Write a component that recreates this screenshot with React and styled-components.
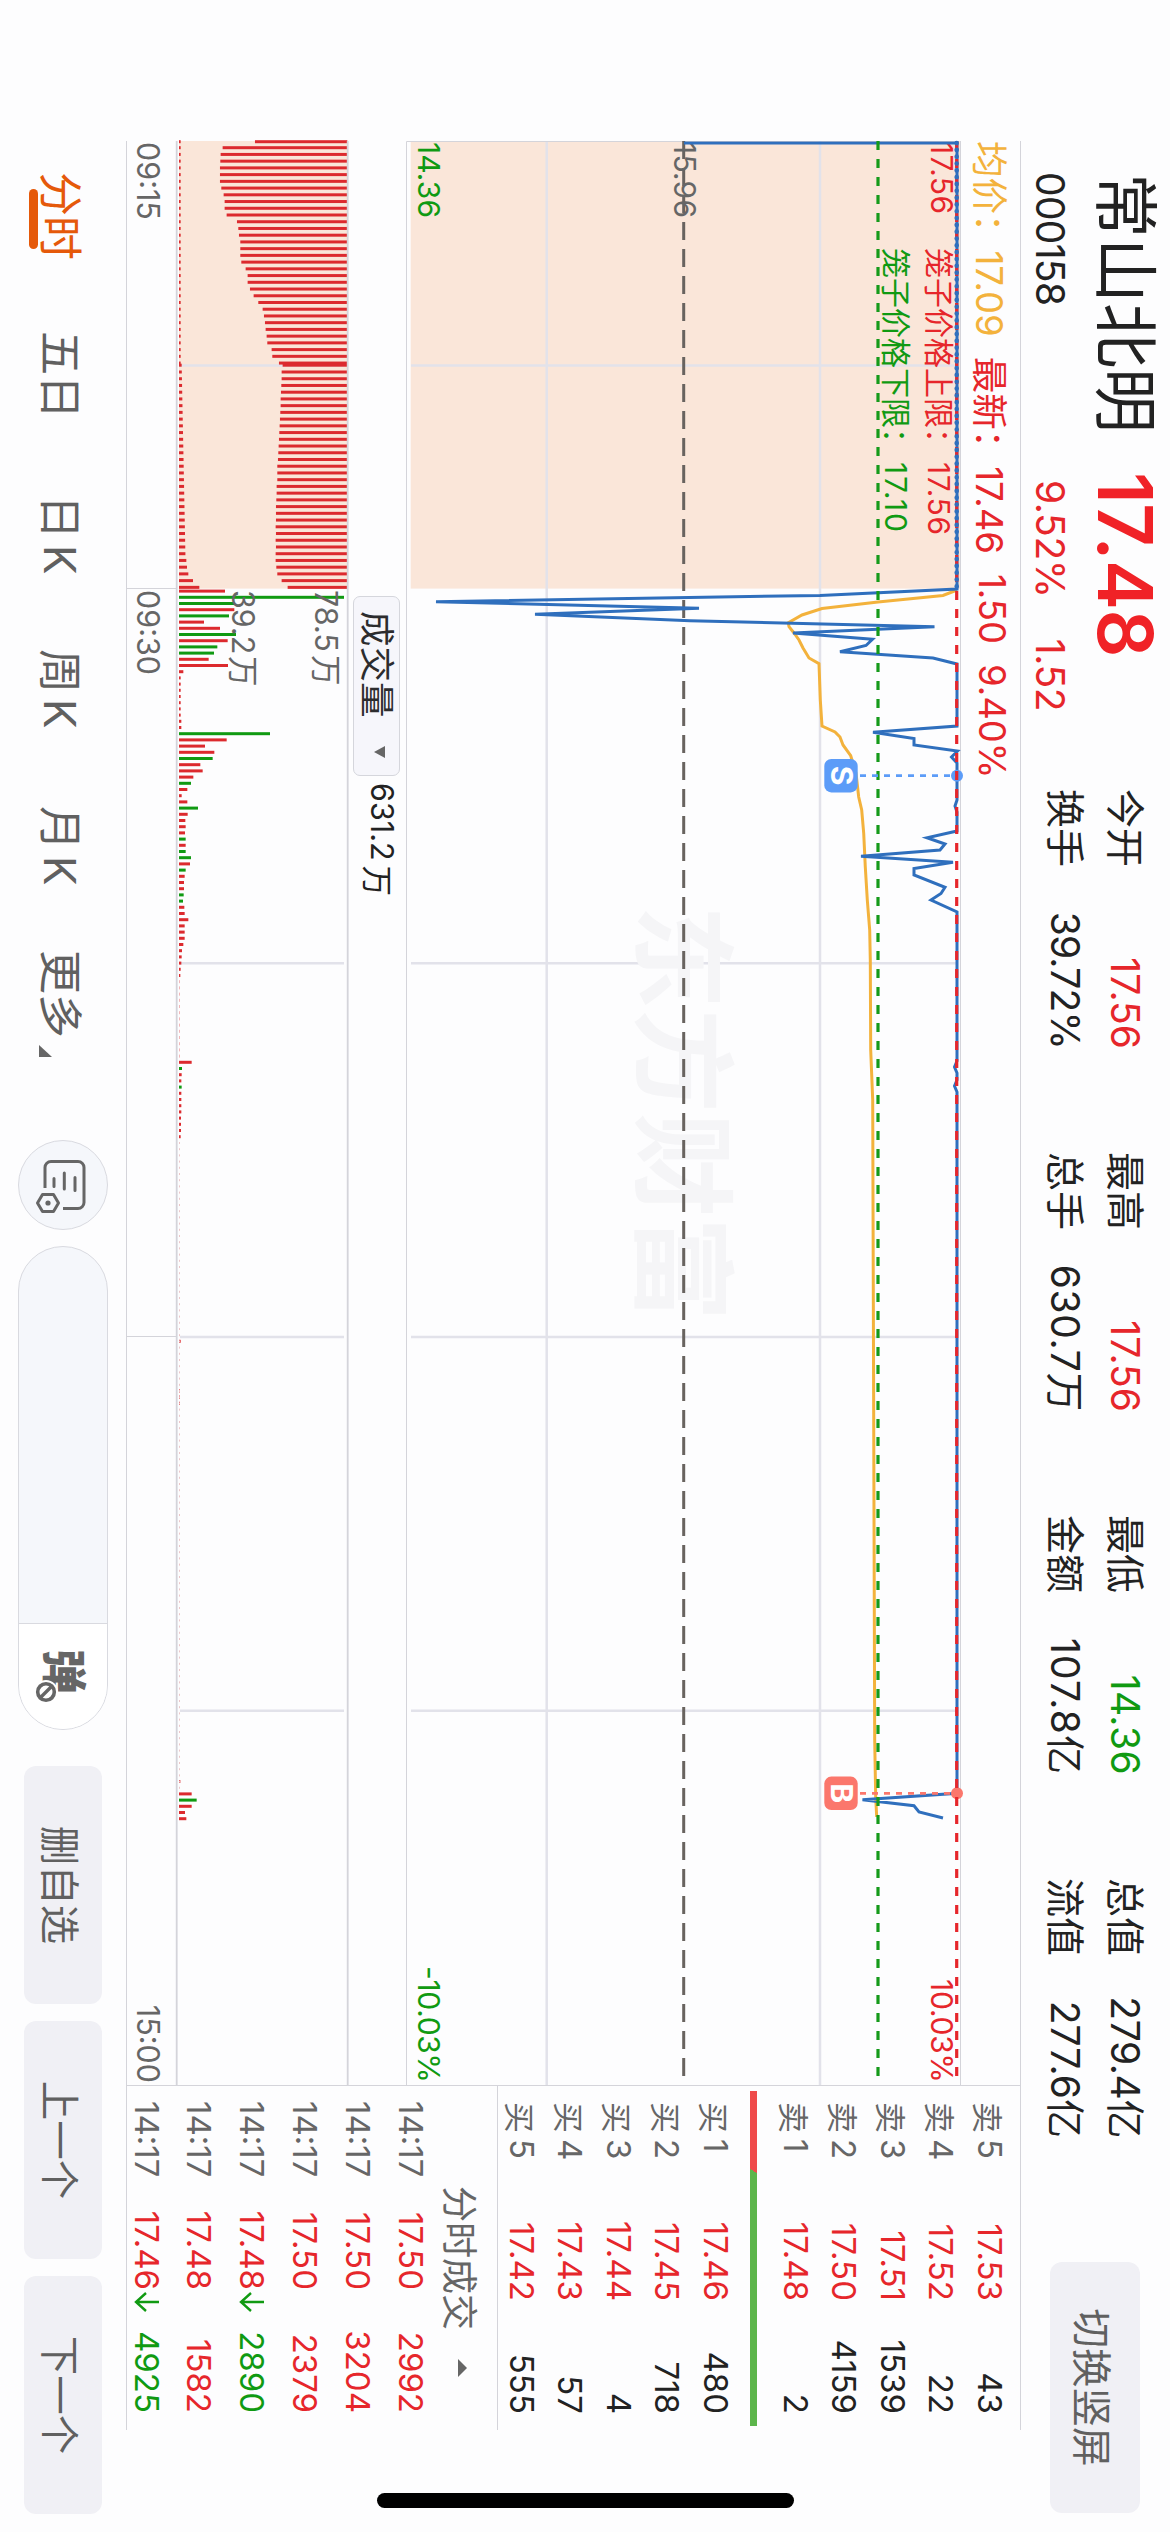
import React from "react";
import styled, { createGlobalStyle } from "styled-components";

const RED = "#e6262b";
const GREEN = "#109a12";
const BLUE = "#2f6fbd";
const LINE = "#d4d4da";

const GlobalStyle = createGlobalStyle`
  * { box-sizing: border-box; }
  body {
    margin: 0;
    background: #fdfdfe;
    font-family: Inter, "Noto Sans CJK SC", sans-serif;
  }
`;

const Device = styled.div`
  width: 1170px;
  height: 2532px;
  overflow: hidden;
`;

/* the page is laid out in landscape and turned a quarter */
const Screen = styled.div`
  width: 2532px;
  height: 1170px;
  position: relative;
  display: flex;
  flex-direction: column;
  background: #fdfdfe;
  color: #222;
  white-space: nowrap;
  transform: translateX(1170px) rotate(90deg);
  transform-origin: 0 0;
`;

const Header = styled.header`
  height: 149px;
  display: flex;
  padding-left: 172px;
`;

const Identity = styled.div`
  width: 300px;
  padding-top: 9px;
`;

const Name = styled.div`
  padding-left: 1px;
  font-size: 65px;
  line-height: 72px;
`;

const Code = styled.div`
  font-size: 39px;
  line-height: 78px;
  letter-spacing: -0.7px;
`;

const PriceBlock = styled.div`
  width: 317px;
  padding-top: 9px;
  color: ${RED};
`;

const LastPrice = styled.div`
  font-size: 75px;
  font-weight: 600;
  line-height: 72px;
  letter-spacing: -0.5px;
  color: #f02227;
`;

const Change = styled.div`
  display: flex;
  gap: 41px;
  padding-left: 8px;
  font-size: 39px;
  line-height: 78px;
  letter-spacing: -0.4px;
`;

const Stats = styled.div`
  display: grid;
  grid-template-columns: repeat(4, 260px);
  grid-auto-rows: 60px;
  column-gap: 103px;
  padding-top: 15px;
`;

const Stat = styled.div`
  display: flex;
  justify-content: space-between;
  font-size: 39px;
  line-height: 60px;
`;

const StatValue = styled.span`
  color: ${({ color }) => color || "#222"};
  letter-spacing: ${({ spacing }) => spacing || "0"};
`;

const GreyButton = styled.button`
  width: ${({ width }) => width || "238px"};
  height: ${({ height }) => height || "78px"};
  border: 0;
  padding: 0;
  border-radius: 12px;
  background: #f0f0f5;
  color: #606060;
  font-family: inherit;
  font-size: 39.5px;
`;

const SwitchSlot = styled.div`
  padding: 30px 0 0 124px;
`;

const Main = styled.main`
  height: 895px;
  width: 2289px;
  margin-left: 141px;
  display: flex;
  border-top: 1px solid ${LINE};
  border-bottom: 1px solid ${LINE};
`;

const Charts = styled.section`
  width: 1945px;
  display: flex;
  flex-direction: column;
  border-right: 1px solid ${LINE};
`;

const Legend = styled.div`
  height: 60px;
  display: flex;
  align-items: center;
  padding-bottom: 3px;
  font-size: 36.5px;
  color: ${RED};
  border-bottom: 1px solid ${LINE};
`;

const LegendItem = styled.span`
  color: ${({ color }) => color};
  margin-right: 20px;
`;

const Plot = styled.svg`
  display: block;
  flex: none;
  overflow: visible;
`;

const VolumeHead = styled.div`
  height: 58px;
  display: flex;
  align-items: center;
  padding-left: 455px;
  gap: 7px;
  font-size: 30.5px;
`;

const Total = styled.span`
  display: flex;
  gap: 5px;
  padding-bottom: 5px;
`;

const Indicator = styled.button`
  display: flex;
  align-items: center;
  width: 180px;
  height: 47px;
  padding: 0 16px 5px 14px;
  justify-content: space-between;
  border: 1.5px solid #d5d6dc;
  border-radius: 7px;
  background: #f6f6fb;
  color: #2c2c2e;
  font-family: inherit;
  font-size: 35.5px;
`;

const TimeAxis = styled.div`
  flex: 1;
  display: flex;
  align-items: center;
  font-size: 30.5px;
  color: #666;
`;

const TimeCell = styled.div`
  width: ${({ width }) => width};
  height: 100%;
  padding: 5px 2px 0 1px;
  display: flex;
  align-items: center;
  justify-content: ${({ end }) => (end ? "flex-end" : "flex-start")};
  border-right: ${({ last }) => (last ? "0" : `1px solid ${LINE}`)};
`;

const Side = styled.aside`
  width: 344px;
  display: flex;
  flex-direction: column;
`;

const Book = styled.div`
  height: 523px;
  padding-top: 6px;
  border-bottom: 1.5px solid ${LINE};
`;

const BookRow = styled.div`
  height: 48.5px;
  display: grid;
  grid-template-columns: 56px 143px 113px;
  padding-left: 16px;
  align-items: center;
  font-size: 33px;
`;

const Level = styled.span`
  color: #666;
  display: flex;
  gap: 6px;
  align-items: center;
`;

const Han = styled.span`
  font-size: 31px;
`;

const Price = styled.span`
  color: ${RED};
  text-align: right;
`;

const Amount = styled.span`
  color: ${({ color }) => color || "#222"};
  text-align: right;
`;

const Ratio = styled.div`
  height: 7.5px;
  width: 335px;
  margin: 14px 0 10px 5px;
  background: linear-gradient(120deg, #ef4a4a 71px, #5cb54b 71px);
`;

const TradesHead = styled.div`
  height: 60px;
  flex: none;
  display: flex;
  align-items: center;
  padding: 9px 0 0 100px;
  gap: 29px;
  font-size: 36px;
  color: #666;
`;

const TradeRow = styled.div`
  height: 52.8px;
  flex: none;
  display: grid;
  grid-template-columns: 80px 109px 24px 99px;
  padding-left: 15px;
  align-items: center;
  font-size: 33px;
`;

const Clock = styled.span`
  color: #666;
`;

const Footer = styled.footer`
  height: 126px;
  display: flex;
  align-items: center;
  padding-left: 172px;
`;

const Tabs = styled.nav`
  width: 968px;
  display: flex;
  font-size: 44px;
  color: #606060;
`;

const Tab = styled.span`
  width: ${({ width }) => width};
  display: flex;
  align-items: baseline;
  gap: 6px;
  color: ${({ active }) => (active ? "#e5590a" : "inherit")};
  position: relative;
`;

const Underline = styled.i`
  position: absolute;
  left: 17px;
  bottom: -2px;
  width: 60px;
  height: 9px;
  border-radius: 5px;
  background: #e5590a;
`;

const MoreArrow = styled.svg`
  width: 12px;
  height: 13px;
  position: relative;
  top: 5px;
  left: 1px;
`;

const RoundButton = styled.div`
  width: 90px;
  height: 90px;
  border-radius: 50%;
  border: 1.5px solid #d9dae0;
  background: #f5f7fb;
  display: flex;
  align-items: center;
  justify-content: center;
`;

const Icon = styled.svg`
  display: block;
  flex: none;
  overflow: visible;
`;

const Barrage = styled.div`
  width: 484px;
  height: 90px;
  margin: 0 36px 0 16px;
  border: 1.5px solid #d9dae0;
  border-radius: 45px;
  background: #f5f7fb;
  display: flex;
  justify-content: flex-end;
`;

const BarrageSwitch = styled.div`
  width: 106px;
  border-left: 1.5px solid #d9dae0;
  border-radius: 0 44px 44px 0;
  background: #fff;
  display: flex;
  align-items: center;
  padding-left: 25px;
`;

const Actions = styled.div`
  display: flex;
  gap: 17px;
`;

const HomeBar = styled.div`
  position: absolute;
  left: 2493px;
  top: 376px;
  width: 15px;
  height: 417px;
  border-radius: 8px;
  background: #000;
`;

const stats = [
  ["今开", "17.56", RED],
  ["最高", "17.56", RED],
  ["最低", "14.36", GREEN, "0.4px"],
  ["总值", "279.4亿", "", "-0.4px"],
  ["换手", "39.72%", "", "-0.8px"],
  ["总手", "630.7万", "", "0.6px"],
  ["金额", "107.8亿", "", "1.1px"],
  ["流值", "277.6亿"],
];

const sells = [
  ["5", "17.53", "43"],
  ["4", "17.52", "22"],
  ["3", "17.51", "1539"],
  ["2", "17.50", "4159"],
  ["1", "17.48", "2"],
];

const buys = [
  ["1", "17.46", "480"],
  ["2", "17.45", "718"],
  ["3", "17.44", "4"],
  ["4", "17.43", "57"],
  ["5", "17.42", "555"],
];

const trades = [
  ["14:17", "17.50", "2992"],
  ["14:17", "17.50", "3204"],
  ["14:17", "17.50", "2379"],
  ["14:17", "17.48", "2890", true],
  ["14:17", "17.48", "1582"],
  ["14:17", "17.46", "4925", true],
];

// [x, y] on the screen, the plot svg shifts them with its viewBox
const pricePath = [
  [143, 486], [143, 213], [589, 213], [595.4, 350], [601.8, 734], [608.2, 471],
  [614.3, 635], [620.8, 480], [626.8, 235.5], [633, 377], [639.3, 297.5],
  [645.5, 304], [651.8, 330], [658, 237], [664, 213], [726, 213], [732.3, 297],
  [738.5, 256], [745, 256], [751, 212.5], [757, 218.5], [763, 213], [800, 213],
  [806, 215], [812, 213], [831, 213], [837.7, 243], [844, 225], [850, 230],
  [856.3, 309], [862.3, 217], [868.5, 256], [875, 256], [887.3, 225],
  [893.5, 229], [900, 239], [912, 213], [1061, 213], [1067, 215.5], [1073, 213],
  [1080, 213], [1086, 215.5], [1092, 213], [1793.3, 213], [1799.7, 307.5],
  [1805.7, 256], [1812, 251], [1818, 227],
];

const averagePath = [
  [590, 213], [595.5, 227], [602, 292], [608.5, 348], [615, 368], [622.7, 381.7],
  [626.7, 381], [633, 376], [640, 371], [648, 367], [658, 361], [663.7, 351],
  [700, 349.7], [726, 348], [732, 335], [737, 330], [745, 327], [755.7, 319.3],
  [773, 314], [797, 311.3], [810, 308.3], [833, 306.3], [867, 304.7],
  [900, 302.7], [930, 300.3], [960, 299.7], [1050, 299.3], [1100, 297.3],
  [1740, 295.3], [1797, 294.3], [1817, 293.3],
];

// unmatched volume of the call auction, hangs from the top
const auction = [
  277, 374, 380, 381, 382, 382, 382, 378, 371, 368, 368, 362, 331, 327, 325, 321,
  321, 321, 318, 305, 299, 299, 292, 281, 267, 254, 250, 247, 245, 242, 240, 227,
  225, 205, 194, 197, 197, 198, 199, 200, 200, 201, 202, 203, 204, 205, 206, 207,
  208, 210, 210, 210, 212, 212, 213, 214, 214, 214, 215, 214, 215, 214, 215, 215,
  213, 210, 197, 179,
];

const auctionX = (i) => {
  if (i === 0) return 141.7;
  if (i < 34) return 147.7 + (i - 1) * 6.73;
  if (i === 34) return 365.2;
  return 372 + (i - 35) * 6.73;
};

const matched = (i) => {
  const tail = { 67: 61, 66: 42, 65: 28, 64: 24, 63: 22 };
  if (tail[i]) return tail[i];
  return i < 34 ? 5 : 8 + (i - 34) * 0.4;
};

// one bar a minute, negative for a falling minute
const minutes = [
  138, -495, -165, 166, -150, 75, 123, -171, 146, -115, -105, 89, 147, 13, 5, 5, 5,
  5, 5, 5, 5, 7, 7, -273, 143, 78, 106, -101, 64, 71, 43, -36, 25, 8, 25, -57, 26,
  19, 20, 18, -20, 20, -20, -36, 33, -20, 17, 15, 15, -14, -12, 16, 17, 28, 17, 17,
  17, 13, 9, 8, 7, 5, 4, 1, 1, 1, 1, 1, 1, 1, 1, 1, 1, 1, 1, 1, 38, -9, 8, 7, -8,
  7, 7, 7, 7, 6, 6, 6, 5,
];

const lateMinutes = { 121: 5, 129: 3, 130: 3, 131: 3, 192: 4, 194: 38, 195: -53, 196: 38, 197: 18, 198: 22 };

const toPoints = (list) => list.map((p) => p.join(",")).join(" ");

function Marker({ x, letter, color }) {
  return (
    <g>
      <line x1={x} x2={x} y1="220" y2="312" stroke={color} strokeWidth="2.7" strokeDasharray="6 6" />
      <circle cx={x} cy="213" r="6" fill={color} />
      <rect x={x - 16.7} y="312.3" width="33.4" height="33.4" rx="7" fill={color} />
      <text x={x} y="339.5" fontSize="30" fontWeight="700" fill="#fff" textAnchor="middle">
        {letter}
      </text>
    </g>
  );
}

function PricePlot() {
  return (
    <Plot width="1944" height="554" viewBox="141 210 1944 554">
      <rect x="141" y="210" width="447.6" height="549.3" fill="#fae6d9" />
      <g stroke="#e2e2ea" strokeWidth="2.5">
        <path d="M141 350H2085M141 623.3H2085M365.4 213V759M963.3 213V759M1337 213V759M1710.7 213V759" />
      </g>
      <path d="M141.5 486V763.5H2085" fill="none" stroke={LINE} />
      <text x="905" y="526" fontSize="104" fontWeight="600" fill="#f5f5f7">东方财富</text>
      <path d="M141 486.3H2085" stroke="#68635f" strokeWidth="3" strokeDasharray="18 9" />

      <g fontSize="30">
        <text x="142" y="239" fill={RED} textLength="72">17.56</text>
        <text x="142" y="496" fill="#666" textLength="76">15.96</text>
        <text x="142" y="752" fill={GREEN} textLength="76">14.36</text>
        <text x="248" y="242" fill={RED}>笼子价格上限：</text>
        <text x="462" y="242" fill={RED} textLength="73">17.56</text>
        <text x="248" y="285" fill={GREEN}>笼子价格下限：</text>
        <text x="462" y="285" fill={GREEN} textLength="70">17.10</text>
        <text x="1979" y="239" fill={RED} textLength="104">10.03%</text>
        <text x="1966" y="752" fill={GREEN} textLength="117">-10.03%</text>
      </g>

      <polyline points={toPoints(averagePath)} fill="none" stroke="#f3b23c" strokeWidth="3" />
      <polyline points={toPoints(pricePath)} fill="none" stroke={BLUE} strokeWidth="3" />
      <path d="M141 292H2085" stroke="#159a1a" strokeWidth="3.2" strokeDasharray="9 9" />
      <Marker x={775.7} letter="S" color="#5c9cf8" />
      <Marker x={1793.3} letter="B" color="#fb776c" />
      <path d="M141 213.3H2085" stroke={RED} strokeWidth="3.2" strokeDasharray="9 9" />
      <path d="M143 213.3H588" stroke={BLUE} strokeWidth="4.6" strokeDasharray="0.1 6.72" strokeLinecap="round" />
    </Plot>
  );
}

function VolumePlot() {
  return (
    <Plot width="1944" height="172" viewBox="141 822 1944 172">
      <rect x="141" y="823" width="447.6" height="168" fill="#fae6d9" />
      <path d="M365.4 826V990M963.3 826V990M1337 826V990M1710.7 826V990" stroke="#e2e2ea" strokeWidth="2.5" />
      <g fill="#dc2a2e">
        {auction.map((length, i) => (
          <React.Fragment key={i}>
            <rect x={auctionX(i) - 1.5} y="822.7" width="3" height={length / 3} />
            <rect x={auctionX(i) - 1.5} y={991 - matched(i) / 3} width="3" height={matched(i) / 3} />
          </React.Fragment>
        ))}
      </g>
      {minutes.map((v, i) => (
        <rect
          key={i}
          x={589.6 + i * 6.2}
          y={991 - Math.abs(v) / 3}
          width="3"
          height={Math.abs(v) / 3}
          fill={v > 0 ? "#dc2a2e" : GREEN}
        />
      ))}
      {Object.entries(lateMinutes).map(([i, v]) => (
        <rect
          key={i}
          x={589.6 + i * 6.2}
          y={991 - Math.abs(v) / 3}
          width="3"
          height={Math.abs(v) / 3}
          fill={v > 0 ? "#dc2a2e" : GREEN}
        />
      ))}
      <path d="M1142 990.5H1790" stroke="#ecc6c9" strokeWidth="1" strokeDasharray="2 4.2" />
      <path d="M141 822.3H2085M141 993.3H2085" stroke="#d4d4da" strokeWidth="1.8" />
      <g fontSize="30.5" fill="#666">
        <text x="590" y="855">
          78.5<tspan x="655">万</tspan>
        </text>
        <text x="590" y="938">
          39.2<tspan x="656">万</tspan>
        </text>
      </g>
    </Plot>
  );
}

function BookRows({ side, rows }) {
  return rows.map(([level, price, amount]) => (
    <BookRow key={level}>
      <Level>
        <Han>{side}</Han>
        {level}
      </Level>
      <Price>{price}</Price>
      <Amount>{amount}</Amount>
    </BookRow>
  ));
}

function SettingsIcon() {
  return (
    <Icon width="54" height="48" viewBox="0 0 54 48" fill="none" stroke="#666" strokeWidth="3">
      <path d="M50.5 24V9a6 6 0 0 0-6-6h-35a6 6 0 0 0-6 6v27a6 6 0 0 0 6 6H30" />
      <path d="M19.5 12h13M15 22.7h16M20.5 33h8" strokeLinecap="round" />
      <path d="M45 28.5l8.5 5v11l-8.5 5-8.5-5v-11z" strokeLinejoin="round" />
      <circle cx="45" cy="39" r="2.6" fill="#666" stroke="none" />
    </Icon>
  );
}

function BarrageIcon() {
  return (
    <Icon width="54" height="54" viewBox="0 0 54 54">
      <text x="0" y="43" fontSize="45" fontWeight="900" fill="#666">弹</text>
      <circle cx="43" cy="44" r="12" fill="#fff" />
      <circle cx="43" cy="44" r="8.3" fill="none" stroke="#666" strokeWidth="3.6" />
      <path d="M38 39l10 10" stroke="#666" strokeWidth="3.4" />
    </Icon>
  );
}

export default function App() {
  return (
    <Device>
      <GlobalStyle />
      <Screen>
        <Header>
          <Identity>
            <Name>常山北明</Name>
            <Code>000158</Code>
          </Identity>
          <PriceBlock>
            <LastPrice>17.48</LastPrice>
            <Change>
              <span>9.52%</span>
              <span>1.52</span>
            </Change>
          </PriceBlock>
          <Stats>
            {stats.map(([label, value, color, spacing]) => (
              <Stat key={label}>
                {label}
                <StatValue color={color} spacing={spacing}>{value}</StatValue>
              </Stat>
            ))}
          </Stats>
          <SwitchSlot>
            <GreyButton width="251px" height="90px">切换竖屏</GreyButton>
          </SwitchSlot>
        </Header>

        <Main>
          <Charts>
            <Legend>
              <LegendItem color="#f3b23c">均价：17.09</LegendItem>
              <LegendItem>最新：17.46</LegendItem>
              <LegendItem>1.50</LegendItem>
              <LegendItem>9.40%</LegendItem>
            </Legend>
            <PricePlot />
            <VolumeHead>
              <Indicator>
                成交量
                <svg width="14" height="12" viewBox="0 0 14 12">
                  <path d="M1 0h12L7 11z" fill="#666" />
                </svg>
              </Indicator>
              <Total>
                631.2
                <span>万</span>
              </Total>
            </VolumeHead>
            <VolumePlot />
            <TimeAxis>
              <TimeCell width="448px">09:15</TimeCell>
              <TimeCell width="748px">09:30</TimeCell>
              <TimeCell width="748px" end last>15:00</TimeCell>
            </TimeAxis>
          </Charts>

          <Side>
            <Book>
              <BookRows side="卖" rows={sells} />
              <Ratio />
              <BookRows side="买" rows={buys} />
            </Book>
            <TradesHead>
              分时成交
              <svg width="18" height="9" viewBox="0 0 18 9">
                <path d="M0 9h18L9 0z" fill="#666" />
              </svg>
            </TradesHead>
            {trades.map(([time, price, amount, down], i) => (
              <TradeRow key={i}>
                <Clock>{time}</Clock>
                <Price>{price}</Price>
                <svg width="22" height="26" viewBox="0 0 22 26" fill="none" stroke={GREEN} strokeWidth="2.4">
                  {down && <path d="M12 1v23M3 14l9 10 9-10" />}
                </svg>
                <Amount color={down ? GREEN : RED}>{amount}</Amount>
              </TradeRow>
            ))}
          </Side>
        </Main>

        <Footer>
          <Tabs>
            <Tab width="159px" active>
              分时
              <Underline />
            </Tab>
            <Tab width="164px">五日</Tab>
            <Tab width="154px">日<span>K</span></Tab>
            <Tab width="157px">周<span>K</span></Tab>
            <Tab width="144px">月<span>K</span></Tab>
            <Tab width="120px">
              更多
              <MoreArrow viewBox="0 0 12 13">
                <path d="M12 0v13H0z" fill="#666" />
              </MoreArrow>
            </Tab>
          </Tabs>
          <RoundButton>
            <SettingsIcon />
          </RoundButton>
          <Barrage>
            <BarrageSwitch>
              <BarrageIcon />
            </BarrageSwitch>
          </Barrage>
          <Actions>
            <GreyButton>删自选</GreyButton>
            <GreyButton>上一个</GreyButton>
            <GreyButton>下一个</GreyButton>
          </Actions>
        </Footer>
        <HomeBar />
      </Screen>
    </Device>
  );
}
